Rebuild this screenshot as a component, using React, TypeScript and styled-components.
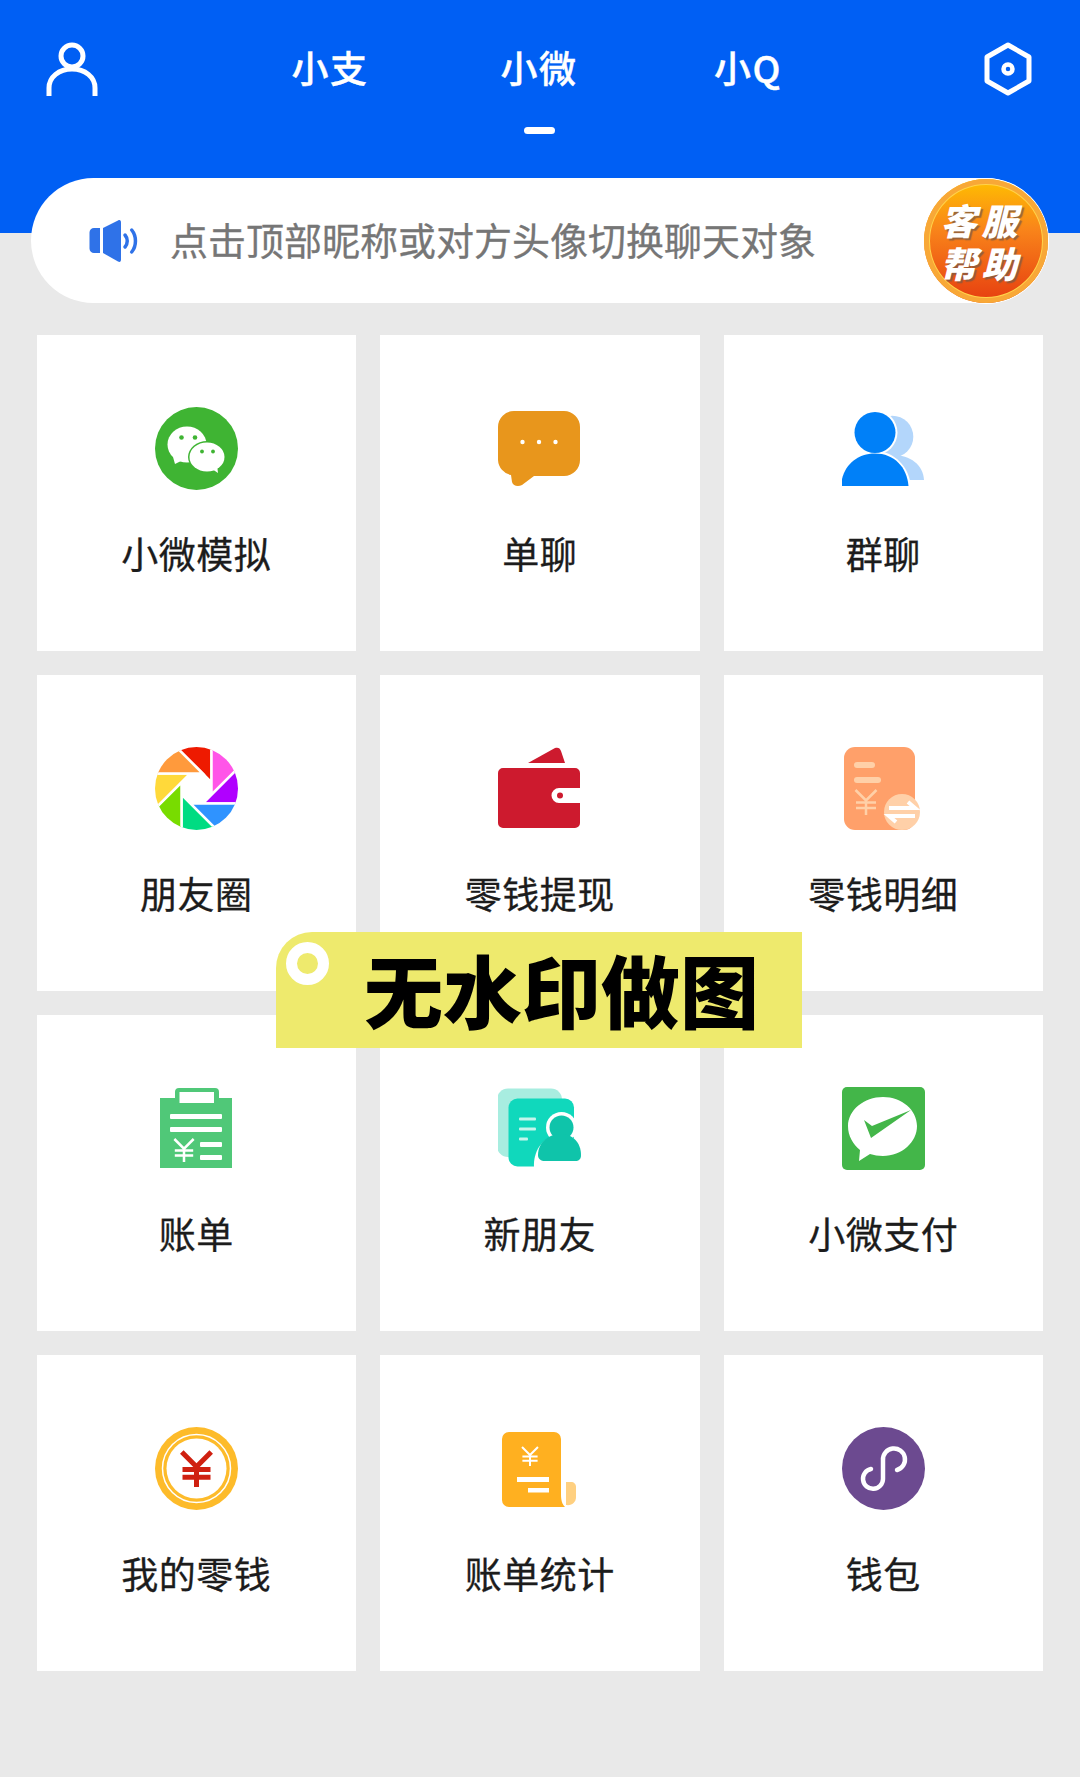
import styled, { createGlobalStyle } from "styled-components";
import type { ReactNode } from "react";

const GlobalStyle = createGlobalStyle`
  html, body {
    margin: 0;
    padding: 0;
    background: #e9e9e9;
  }
  body {
    font-family: "Noto Sans CJK SC", "Noto Sans", sans-serif;
  }
`;

const Page = styled.div`
  position: relative;
  width: 1080px;
  height: 1777px;
  overflow: hidden;
  background: #e9e9e9;
`;

const Header = styled.header`
  display: grid;
  grid-template-columns: 1fr auto 1fr;
  align-items: flex-start;
  height: 233px;
  padding: 42px 48px 0 46px;
  box-sizing: border-box;
  background: #005ff4;
  color: #fff;
`;

const HeaderIcon = styled.svg<{ $end?: boolean }>`
  display: block;
  justify-self: ${(p) => (p.$end ? "end" : "start")};
`;

const Tabs = styled.nav`
  display: flex;
`;

const Tab = styled.div`
  display: flex;
  flex-direction: column;
  align-items: center;
  width: 209px;
  margin-top: -2px;
`;

const TabLabel = styled.span`
  font-size: 37px;
  font-weight: 500;
  line-height: 54px;
  letter-spacing: 1.500px;
  -webkit-text-stroke: 0.4px #fff;
`;

const TabMark = styled.span<{ $on?: boolean }>`
  width: 31px;
  height: 7px;
  margin-top: 33px;
  border-radius: 4px;
  background: ${(p) => (p.$on ? "#fff" : "transparent")};
`;

const Notice = styled.div`
  display: flex;
  align-items: center;
  height: 125px;
  margin: -55px 32px 0 31px;
  padding-left: 58px;
  border-radius: 63px;
  background: #fff;
`;

const NoticeText = styled.span`
  margin-left: 32px;
  margin-bottom: 4px;
  font-size: 38px;
  line-height: 50px;
  color: #767676;
  white-space: nowrap;
  -webkit-text-stroke: 0.3px #767676;
`;

const Badge = styled.div`
  display: flex;
  flex-direction: column;
  align-items: center;
  justify-content: center;
  box-sizing: border-box;
  width: 124px;
  height: 124px;
  margin-left: auto;
  border-radius: 50%;
  background: linear-gradient(180deg, #ffc000 0%, #f9851a 40%, #e63d10 100%);
  box-shadow: inset 0 0 0 5px rgba(235, 90, 20, 0.35), inset 0 0 0 6px #ffd34a,
    0 0 0 1px #fff;
`;

const BadgeLine = styled.span`
  margin-right: 9px;
  font-size: 36px;
  font-weight: 900;
  font-style: italic;
  line-height: 43px;
  letter-spacing: 5px;
  color: #fff;
  text-shadow: 2px 2px 1px rgba(120, 90, 70, 0.75);
`;

const Grid = styled.main`
  display: grid;
  grid-template-columns: repeat(3, 319.5px);
  grid-auto-rows: 316px;
  gap: 24px;
  margin-top: 32px;
  padding-left: 36.5px;
`;

const Card = styled.div`
  display: flex;
  flex-direction: column;
  align-items: center;
  padding-top: 72px;
  box-sizing: border-box;
  background: #fff;
`;

const Icon = styled.svg`
  display: block;
  width: 83px;
  height: 83px;
`;

const Label = styled.span`
  margin-top: 41px;
  font-size: 37px;
  line-height: 44px;
  letter-spacing: 0.500px;
  color: #1c1c1c;
  white-space: nowrap;
  -webkit-text-stroke: 0.3px #1c1c1c;
`;

const Tag = styled.div`
  position: absolute;
  left: 276px;
  top: 932px;
  display: flex;
  align-items: center;
  box-sizing: border-box;
  width: 526px;
  height: 116px;
  padding-left: 88px;
  border-top-left-radius: 36px;
  background: #eeea6d;
`;

const TagHole = styled.span`
  position: absolute;
  left: 10px;
  top: 10px;
  width: 21px;
  height: 21px;
  border: 11px solid #fff;
  border-radius: 50%;
`;

const TagText = styled.span`
  margin-bottom: 3px;
  font-size: 79px;
  font-weight: 900;
  line-height: 110px;
  color: #000;
  white-space: nowrap;
`;

const Glyph = ({ children }: { children: ReactNode }) => (
  <Icon viewBox="0 0 83 83">{children}</Icon>
);

const Yen = ({ x, y, s, color, w }: { x: number; y: number; s: number; color: string; w: number }) => (
  <path
    d={`M${x - s * 0.42} ${y}L${x} ${y + s * 0.42}L${x + s * 0.42} ${y}M${x} ${y + s * 0.42}V${y + s}M${x - s * 0.4} ${y + s * 0.5}H${x + s * 0.4}M${x - s * 0.4} ${y + s * 0.72}H${x + s * 0.4}`}
    fill="none"
    stroke={color}
    strokeWidth={w}
  />
);

const WechatIcon = () => (
  <Glyph>
    <circle cx="41.5" cy="41.5" r="41.5" fill="#3fb433" />
    <ellipse cx="32" cy="37.5" rx="19.5" ry="18" fill="#fff" />
    <path d="M18 50l2 7 8-4z" fill="#fff" />
    <circle cx="26.500" cy="30.500" r="2.300" fill="#3fb433" />
    <circle cx="40" cy="30.500" r="2.300" fill="#3fb433" />
    <ellipse cx="52" cy="50" rx="19" ry="16" fill="#3fb433" />
    <ellipse cx="52" cy="50" rx="17.500" ry="14.500" fill="#fff" />
    <path d="M57 62l6 4-1-8z" fill="#fff" />
    <circle cx="47" cy="44.500" r="1.900" fill="#3fb433" />
    <circle cx="58" cy="44.500" r="1.900" fill="#3fb433" />
  </Glyph>
);

const ChatIcon = () => (
  <Glyph>
    <path
      d="M16 4h50a16 16 0 0 1 16 16v33a16 16 0 0 1-16 16H36l-12 9c-4 2-9 1-10-3l-1-7A16 16 0 0 1 0 53V20A16 16 0 0 1 16 4z"
      fill="#e8961c"
    />
    <circle cx="24.500" cy="35" r="2.200" fill="#fff" />
    <circle cx="41" cy="35" r="2.200" fill="#fff" />
    <circle cx="57.500" cy="35" r="2.200" fill="#fff" />
  </Glyph>
);

const GroupIcon = () => (
  <Glyph>
    <circle cx="50.300" cy="29.700" r="21" fill="#b3d6fb" />
    <path d="M50 48c19 0 31 10 32 25H60z" fill="#b3d6fb" />
    <circle cx="33" cy="25.500" r="22.500" fill="#fff" />
    <path d="M-3 81C-2 60 14 44 33 44s35 16 36 37z" fill="#fff" />
    <circle cx="33" cy="25.500" r="20.500" fill="#0080f8" />
    <path d="M-1 79C0 60 14 46.500 33 46.500S65 60 66.500 79z" fill="#0080f8" />
  </Glyph>
);

// 光圈的八片叶片：每片的尖端在内八边形的顶点上，两条边沿相邻的边延长
const APERTURE = ["#ee1a00", "#ff55e8", "#b000ff", "#2f93ff", "#00dc82", "#78dc00", "#ffd93a", "#ff9a3c"];

const bladePoints = (i: number) => {
  const r = 16.2;
  const vertex = (k: number) => {
    const a = ((k * 45 - 22.5) * Math.PI) / 180;
    return [41.5 + r * Math.cos(a), 41.5 + r * Math.sin(a)];
  };
  const [tx, ty] = vertex(i);
  const [nx, ny] = vertex(i + 1);
  const [px, py] = vertex(i - 1);
  return [
    [tx, ty],
    [tx + (tx - nx) * 8, ty + (ty - ny) * 8],
    [tx + (px - tx) * 8, ty + (py - ty) * 8],
  ]
    .map((q) => q.map((n) => n.toFixed(1)).join(","))
    .join(" ");
};

const ApertureIcon = () => (
  <Glyph>
    <defs>
      <clipPath id="aperture-clip">
        <circle cx="41.5" cy="41.5" r="41.5" />
      </clipPath>
    </defs>
    <g clipPath="url(#aperture-clip)">
      {APERTURE.map((c, i) => (
        <polygon key={c} points={bladePoints(i)} fill={c} stroke="#fff" strokeWidth="2.500" />
      ))}
    </g>
  </Glyph>
);

const WalletIcon = () => (
  <Glyph>
    <path d="M30 16L57 1c3-1 5 0 6 3l4 12z" fill="#cd1a2e" />
    <path
      d="M5 21h72a5 5 0 0 1 5 5v15H61a7.500 7.500 0 0 0 0 15h21v20a5 5 0 0 1-5 5H5a5 5 0 0 1-5-5V26a5 5 0 0 1 5-5z"
      fill="#cd1a2e"
    />
    <circle cx="62" cy="48.500" r="3" fill="#cd1a2e" />
  </Glyph>
);

const ChangeIcon = () => (
  <Glyph>
    <rect x="2" y="0" width="71" height="83" rx="11" fill="#ffa06a" />
    <rect x="12" y="15" width="21" height="6" rx="3" fill="#ffd0a8" />
    <rect x="12" y="30" width="27" height="6" rx="3" fill="#ffd0a8" />
    <Yen x={24} y={43} s={25} color="#ffd0a8" w={2.500} />
    <circle cx="60" cy="65" r="18" fill="#ffd0a8" />
    <path d="M47 61h26l-7-6M73 69H47l7 6" fill="none" stroke="#fff" strokeWidth="4" />
  </Glyph>
);

const BillIcon = () => (
  <Glyph>
    <path d="M5 11h15V5a4 4 0 0 1 4-4h36a4 4 0 0 1 4 4v6h13v70H5z" fill="#50c878" />
    <rect x="24.500" y="5" width="34.500" height="11" fill="#fff" />
    <rect x="15" y="27" width="52" height="5" rx="1" fill="#fff" />
    <rect x="15" y="40" width="52" height="5" rx="1" fill="#fff" />
    <rect x="45" y="55" width="22" height="5" rx="1" fill="#fff" />
    <rect x="45" y="68" width="22" height="5" rx="1" fill="#fff" />
    <Yen x={29} y={52} s={23} color="#fff" w={2.500} />
  </Glyph>
);

const FriendIcon = () => (
  <Glyph>
    <rect x="-1" y="1.500" width="65" height="68.500" rx="11" fill="#a8ede0" />
    <rect x="10.500" y="11.500" width="65.500" height="68" rx="9" fill="#10d8bc" />
    <rect x="21" y="30.500" width="17" height="3" rx="1" fill="#c5f5ec" />
    <rect x="21" y="40.500" width="17" height="3" rx="1" fill="#c5f5ec" />
    <rect x="21" y="50.500" width="9" height="3" rx="1" fill="#c5f5ec" />
    <circle cx="63.500" cy="40.500" r="15.500" fill="#fff" />
    <path d="M36 80c-1-17 10-32 27-32s24 14 24 30l-8 4H40z" fill="#fff" />
    <circle cx="63.500" cy="40.500" r="12" fill="#0fc4aa" />
    <path d="M40 68c0-12 10-21 23-21 12 0 20 9 20 21 0 4-2 6-6 6H47c-4 0-7-2-7-6z" fill="#0fc4aa" />
  </Glyph>
);

const PayIcon = () => (
  <Glyph>
    <rect width="83" height="83" rx="5" fill="#43b649" />
    <path d="M41 10c19 0 34 13 34 29S60 69 41 69c-5 0-9-1-13-2l-11 7 1-11C11 57 6 49 6 39 6 23 22 10 41 10z" fill="#fff" />
    <path d="M22 33l8 6 39-16-40 28z" fill="#43b649" />
  </Glyph>
);

const CoinIcon = () => (
  <Glyph>
    <circle cx="41.5" cy="41.5" r="41.500" fill="#fdbb2a" />
    <circle cx="41.5" cy="41.5" r="34" fill="none" stroke="#fff" strokeWidth="1.500" />
    <circle cx="41.5" cy="41.5" r="30" fill="#fff" />
    <Yen x={41.5} y={25} s={35} color="#cf2010" w={5} />
  </Glyph>
);

const ReceiptIcon = () => (
  <Glyph>
    <path d="M68 55h5c3 0 5 2 5 5v10c0 5-4 9-10 8z" fill="#ffd080" />
    <path d="M11 5h45a7 7 0 0 1 7 7v55c0 6 1 10 4 13H11a7 7 0 0 1-7-7V12a7 7 0 0 1 7-7z" fill="#ffb020" />
    <Yen x={32} y={20} s={19} color="#fff" w={2} />
    <rect x="19" y="50" width="32" height="5" fill="#fff" />
    <rect x="30" y="61" width="21" height="4.500" fill="#fff" />
  </Glyph>
);

const MiniIcon = () => (
  <Glyph>
    <circle cx="41.5" cy="41.5" r="41.5" fill="#6c4a90" />
    <path
      d="M29 42A10 10 0 1 0 41 52V33A11 11 0 1 1 55 43"
      fill="none"
      stroke="#fff"
      strokeWidth="4.500"
      strokeLinecap="round"
    />
  </Glyph>
);

const ITEMS: { label: string; icon: ReactNode }[] = [
  { label: "小微模拟", icon: <WechatIcon /> },
  { label: "单聊", icon: <ChatIcon /> },
  { label: "群聊", icon: <GroupIcon /> },
  { label: "朋友圈", icon: <ApertureIcon /> },
  { label: "零钱提现", icon: <WalletIcon /> },
  { label: "零钱明细", icon: <ChangeIcon /> },
  { label: "账单", icon: <BillIcon /> },
  { label: "新朋友", icon: <FriendIcon /> },
  { label: "小微支付", icon: <PayIcon /> },
  { label: "我的零钱", icon: <CoinIcon /> },
  { label: "账单统计", icon: <ReceiptIcon /> },
  { label: "钱包", icon: <MiniIcon /> },
];

const TABS = ["小支", "小微", "小Q"];

export default function App() {
  return (
    <Page>
      <GlobalStyle />
      <Header>
        <HeaderIcon width="52" height="54" viewBox="0 0 52 54">
          <g fill="none" stroke="#fff" strokeWidth="5">
            <circle cx="26" cy="14" r="11" />
            <path d="M3 54V46c0-11 10-19 23-19s23 8 23 19v8" />
          </g>
        </HeaderIcon>
        <Tabs>
          {TABS.map((t) => (
            <Tab key={t}>
              <TabLabel>{t}</TabLabel>
              <TabMark $on={t === "小微"} />
            </Tab>
          ))}
        </Tabs>
        <HeaderIcon $end width="48" height="54" viewBox="0 0 48 54">
          <path d="M24 3l21 12v24L24 51 3 39V15z" fill="none" stroke="#fff" strokeWidth="5" strokeLinejoin="round" />
          <circle cx="24" cy="27" r="4.500" fill="none" stroke="#fff" strokeWidth="4.500" />
        </HeaderIcon>
      </Header>
      <Notice>
        <svg width="49" height="44" viewBox="0 0 49 44">
          <path d="M5 9h6v25H5a4.500 4.500 0 0 1-4.500-4.500v-16A4.500 4.500 0 0 1 5 9z" fill="#2f72e8" />
          <path d="M14 9L29 1.500c2-1 3 0 3 2v37c0 2-1 3-3 2L14 34z" fill="#2f72e8" />
          <path d="M36 16c3 3.500 3 8.500 0 12M42.700 11c5 6 5 16 0 22" fill="none" stroke="#2f72e8" strokeWidth="3.500" strokeLinecap="round" />
        </svg>
        <NoticeText>点击顶部昵称或对方头像切换聊天对象</NoticeText>
        <Badge>
          <BadgeLine>客服</BadgeLine>
          <BadgeLine>帮助</BadgeLine>
        </Badge>
      </Notice>
      <Grid>
        {ITEMS.map((item) => (
          <Card key={item.label}>
            {item.icon}
            <Label>{item.label}</Label>
          </Card>
        ))}
      </Grid>
      <Tag>
        <TagHole />
        <TagText>无水印做图</TagText>
      </Tag>
    </Page>
  );
}
